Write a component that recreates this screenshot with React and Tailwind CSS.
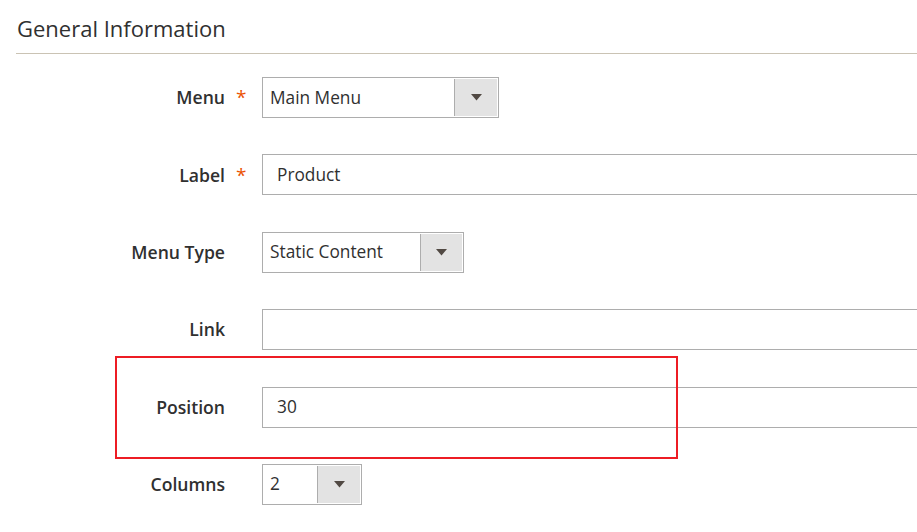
const fields = [
  { label: "Menu", required: true, type: "select", value: "Main Menu", width: "w-[237px]", btn: "w-[43px]" },
  { label: "Label", required: true, type: "input", value: "Product" },
  { label: "Menu Type", type: "select", value: "Static Content", width: "w-[202px]", btn: "w-[42px]" },
  { label: "Link", type: "input", value: "" },
  { label: "Position", type: "input", value: "30", marked: true },
  { label: "Columns", type: "select", value: "2", width: "w-[100px]", btn: "w-[43px]" },
];

const Arrow = () => (
  <svg width="11" height="7" viewBox="0 0 11 7">
    <path d="M0 0h11L5.5 6.5z" fill="#514943" />
  </svg>
);

const Field = ({ field }) => {
  if (field.type === "select") {
    return (
      <div className={`flex h-[41px] border border-[#adadad] bg-white ${field.width}`}>
        <div className="flex-1 flex items-center pl-[7px] text-[17.3px] text-[#303030]">
          {field.value}
        </div>
        <div className={`flex items-center justify-center border-l border-[#adadad] bg-[#e3e3e3] my-px mr-px ${field.btn}`}>
          <Arrow />
        </div>
      </div>
    );
  }
  return (
    <div className="flex h-[41px] w-[720px] shrink-0 items-center border border-[#adadad] bg-white pl-[14px] text-[17.3px] text-[#303030]">
      {field.value}
    </div>
  );
};

const App = () => {
  return (
    <div
      className="min-h-screen w-full overflow-hidden bg-white"
      style={{ fontFamily: '"Open Sans", "Noto Sans", sans-serif' }}
    >
      <div className="pl-4">
        <div className="border-b border-[#cac3b4] pt-[14px] pb-[11px] pl-px">
          <h2 className="text-[22px] leading-[28px] text-[#303030]">General Information</h2>
        </div>

        <div className="flex flex-col gap-[36.4px] pt-[23px]">
          {fields.map((field) => (
            <div key={field.label} className="relative flex items-center">
              {/* annotation box */}
              {field.marked && (
                <div className="absolute left-[99px] top-[-31px] h-[103px] w-[563px] border-2 border-[#ed1c24]" />
              )}
              <div className="w-[209px] shrink-0 text-right text-[17.6px] font-semibold text-[#303030]">
                {field.label}
              </div>
              <div className="w-[37px] shrink-0 pl-[11px] text-[19px] text-[#eb5202]">
                {field.required ? "*" : ""}
              </div>
              <Field field={field} />
            </div>
          ))}
        </div>
      </div>
    </div>
  );
};

export default App;
